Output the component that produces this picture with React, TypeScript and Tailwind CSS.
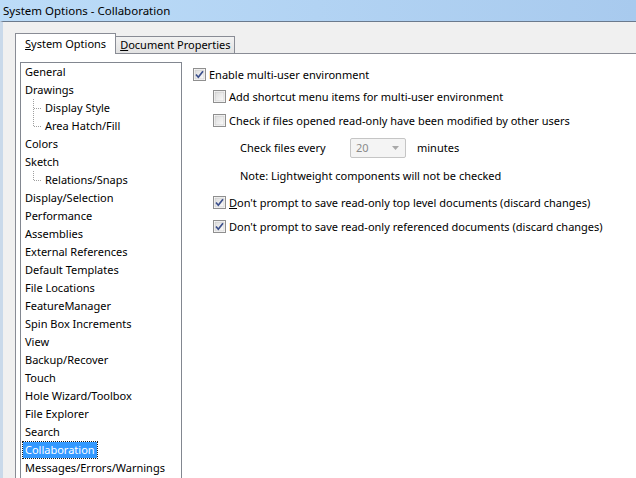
import React from 'react';

// ── Tree data ──────────────────────────────────────────────────────

type Node = { label: string; child?: boolean; last?: boolean; selected?: boolean };

const nodes: Node[] = [
  { label: 'General' },
  { label: 'Drawings' },
  { label: 'Display Style', child: true },
  { label: 'Area Hatch/Fill', child: true, last: true },
  { label: 'Colors' },
  { label: 'Sketch' },
  { label: 'Relations/Snaps', child: true, last: true },
  { label: 'Display/Selection' },
  { label: 'Performance' },
  { label: 'Assemblies' },
  { label: 'External References' },
  { label: 'Default Templates' },
  { label: 'File Locations' },
  { label: 'FeatureManager' },
  { label: 'Spin Box Increments' },
  { label: 'View' },
  { label: 'Backup/Recover' },
  { label: 'Touch' },
  { label: 'Hole Wizard/Toolbox' },
  { label: 'File Explorer' },
  { label: 'Search' },
  { label: 'Collaboration', selected: true },
  { label: 'Messages/Errors/Warnings' },
];

// ── Sub-components ─────────────────────────────────────────────────

function Connector({ last }: { last?: boolean }) {
  return (
    <svg width="10" height="18" className="shrink-0">
      <line x1="0.5" y1={0} x2="0.5" y2={last ? 9 : 18} stroke="#a0a0a0" strokeDasharray="1 1" />
      <line x1="1" y1="9.5" x2="9" y2="9.5" stroke="#a0a0a0" strokeDasharray="1 1" />
    </svg>
  );
}

function Check({ checked }: { checked?: boolean }) {
  return (
    <svg width="13" height="13" className="shrink-0">
      <defs>
        <linearGradient id="cbg" x1="0" y1="0" x2="1" y2="1">
          <stop offset="0" stopColor="#dcdcdc" />
          <stop offset="1" stopColor="#fbfbfb" />
        </linearGradient>
      </defs>
      <rect x="0.5" y="0.5" width="12" height="12" fill="#fff" stroke="#8f8f8f" />
      <rect x="2" y="2" width="9" height="9" fill="url(#cbg)" stroke="#c4c4c4" strokeWidth="0.6" />
      {checked && (
        <path d="M3 6.5 L5.3 9.2 L10 3.2" fill="none" stroke="#3b4f8c" strokeWidth="1.7" />
      )}
    </svg>
  );
}

function Option({ checked, children, className = '' }: { checked?: boolean; children: React.ReactNode; className?: string }) {
  return (
    <div className={`flex items-center gap-[3px] h-[13px] whitespace-nowrap ${className}`}>
      <Check checked={checked} />
      <span className="leading-[13px]">{children}</span>
    </div>
  );
}

// ── Main component ─────────────────────────────────────────────────

export default function App() {
  return (
    <div
      className="w-[636px] h-[478px] overflow-hidden bg-[#f0f0f0] text-[11px] text-black"
      style={{ fontFamily: '"Noto Sans", "Open Sans", sans-serif' }}
    >
      {/* Title bar */}
      <div className="h-[21px] bg-gradient-to-r from-[#bcdcf8] to-[#a8caee] flex items-center pl-[3px] text-[11.5px] leading-none">
        System Options - Collaboration
      </div>

      {/* Window body */}
      <div className="h-[457px] border-t border-[#6b7a8d] border-l-[3px] border-l-[#c9d9ea] bg-[#f0f0f0]">
        <div className="pl-[12px] pt-[10px] h-full flex flex-col">
          {/* Tabs */}
          <div className="flex items-end h-[21px]">
            <div className="h-[21px] px-[9px] bg-white border border-b-0 border-[#898c95] flex items-center relative top-[1px] z-10">
              <span><span className="underline">S</span>ystem Options</span>
            </div>
            <div className="h-[17px] px-[4px] bg-gradient-to-b from-[#f2f2f2] to-[#e2e2e2] border border-l-0 border-b-0 border-[#898c95] flex items-center">
              <span><span className="underline">D</span>ocument Properties</span>
            </div>
          </div>

          {/* Tab panel */}
          <div className="flex-1 bg-white border-t border-l border-[#898c95] flex pl-[4px] pt-[8px] gap-[11px]">
            {/* Tree */}
            <div className="w-[162px] shrink-0 self-stretch border border-b-0 border-[#828790] pl-[2px]">
              {nodes.map(n => (
                <div key={n.label} className="h-[18px] flex items-center whitespace-nowrap">
                  {n.child && (
                    <div className="flex items-center pl-[10px]">
                      <Connector last={n.last} />
                    </div>
                  )}
                  <span
                    className={
                      n.selected
                        ? 'bg-[#3399ff] text-white px-[2px] h-[16px] leading-[16px] outline-1 outline-dotted outline-[#1a1a1a]'
                        : 'px-[2px]'
                    }
                  >
                    {n.label}
                  </span>
                </div>
              ))}
            </div>

            {/* Options */}
            <div className="pt-[6px] flex flex-col">
              <Option checked>Enable multi-user environment</Option>
              <div className="pl-[20px] flex flex-col">
                <Option className="mt-[9px]">Add shortcut menu items for multi-user environment</Option>
                <Option className="mt-[11px]">Check if files opened read-only have been modified by other users</Option>
                <div className="flex items-center mt-[11px] pl-[27px] h-[20px] whitespace-nowrap">
                  <span className="w-[110px]">Check files every</span>
                  <div className="w-[56px] h-[20px] border border-[#c5c5c5] rounded-[2px] bg-[#f4f4f4] flex items-center justify-between pl-[5px] pr-[6px] text-[#8a8a8a]">
                    <span>20</span>
                    <svg width="7" height="4"><path d="M0 0 H7 L3.5 4 Z" fill="#a8a8a8" /></svg>
                  </div>
                  <span className="ml-[11px]">minutes</span>
                </div>
                <div className="pl-[27px] mt-[10px] h-[16px] leading-[16px] whitespace-nowrap">
                  Note: Lightweight components will not be checked
                </div>
                <Option checked className="mt-[12px]">
                  <span className="underline">D</span>on't prompt to save read-only top level documents (discard changes)
                </Option>
                <Option checked className="mt-[11px]">Don't prompt to save read-only referenced documents (discard changes)</Option>
              </div>
            </div>
          </div>
        </div>
      </div>
    </div>
  );
}
